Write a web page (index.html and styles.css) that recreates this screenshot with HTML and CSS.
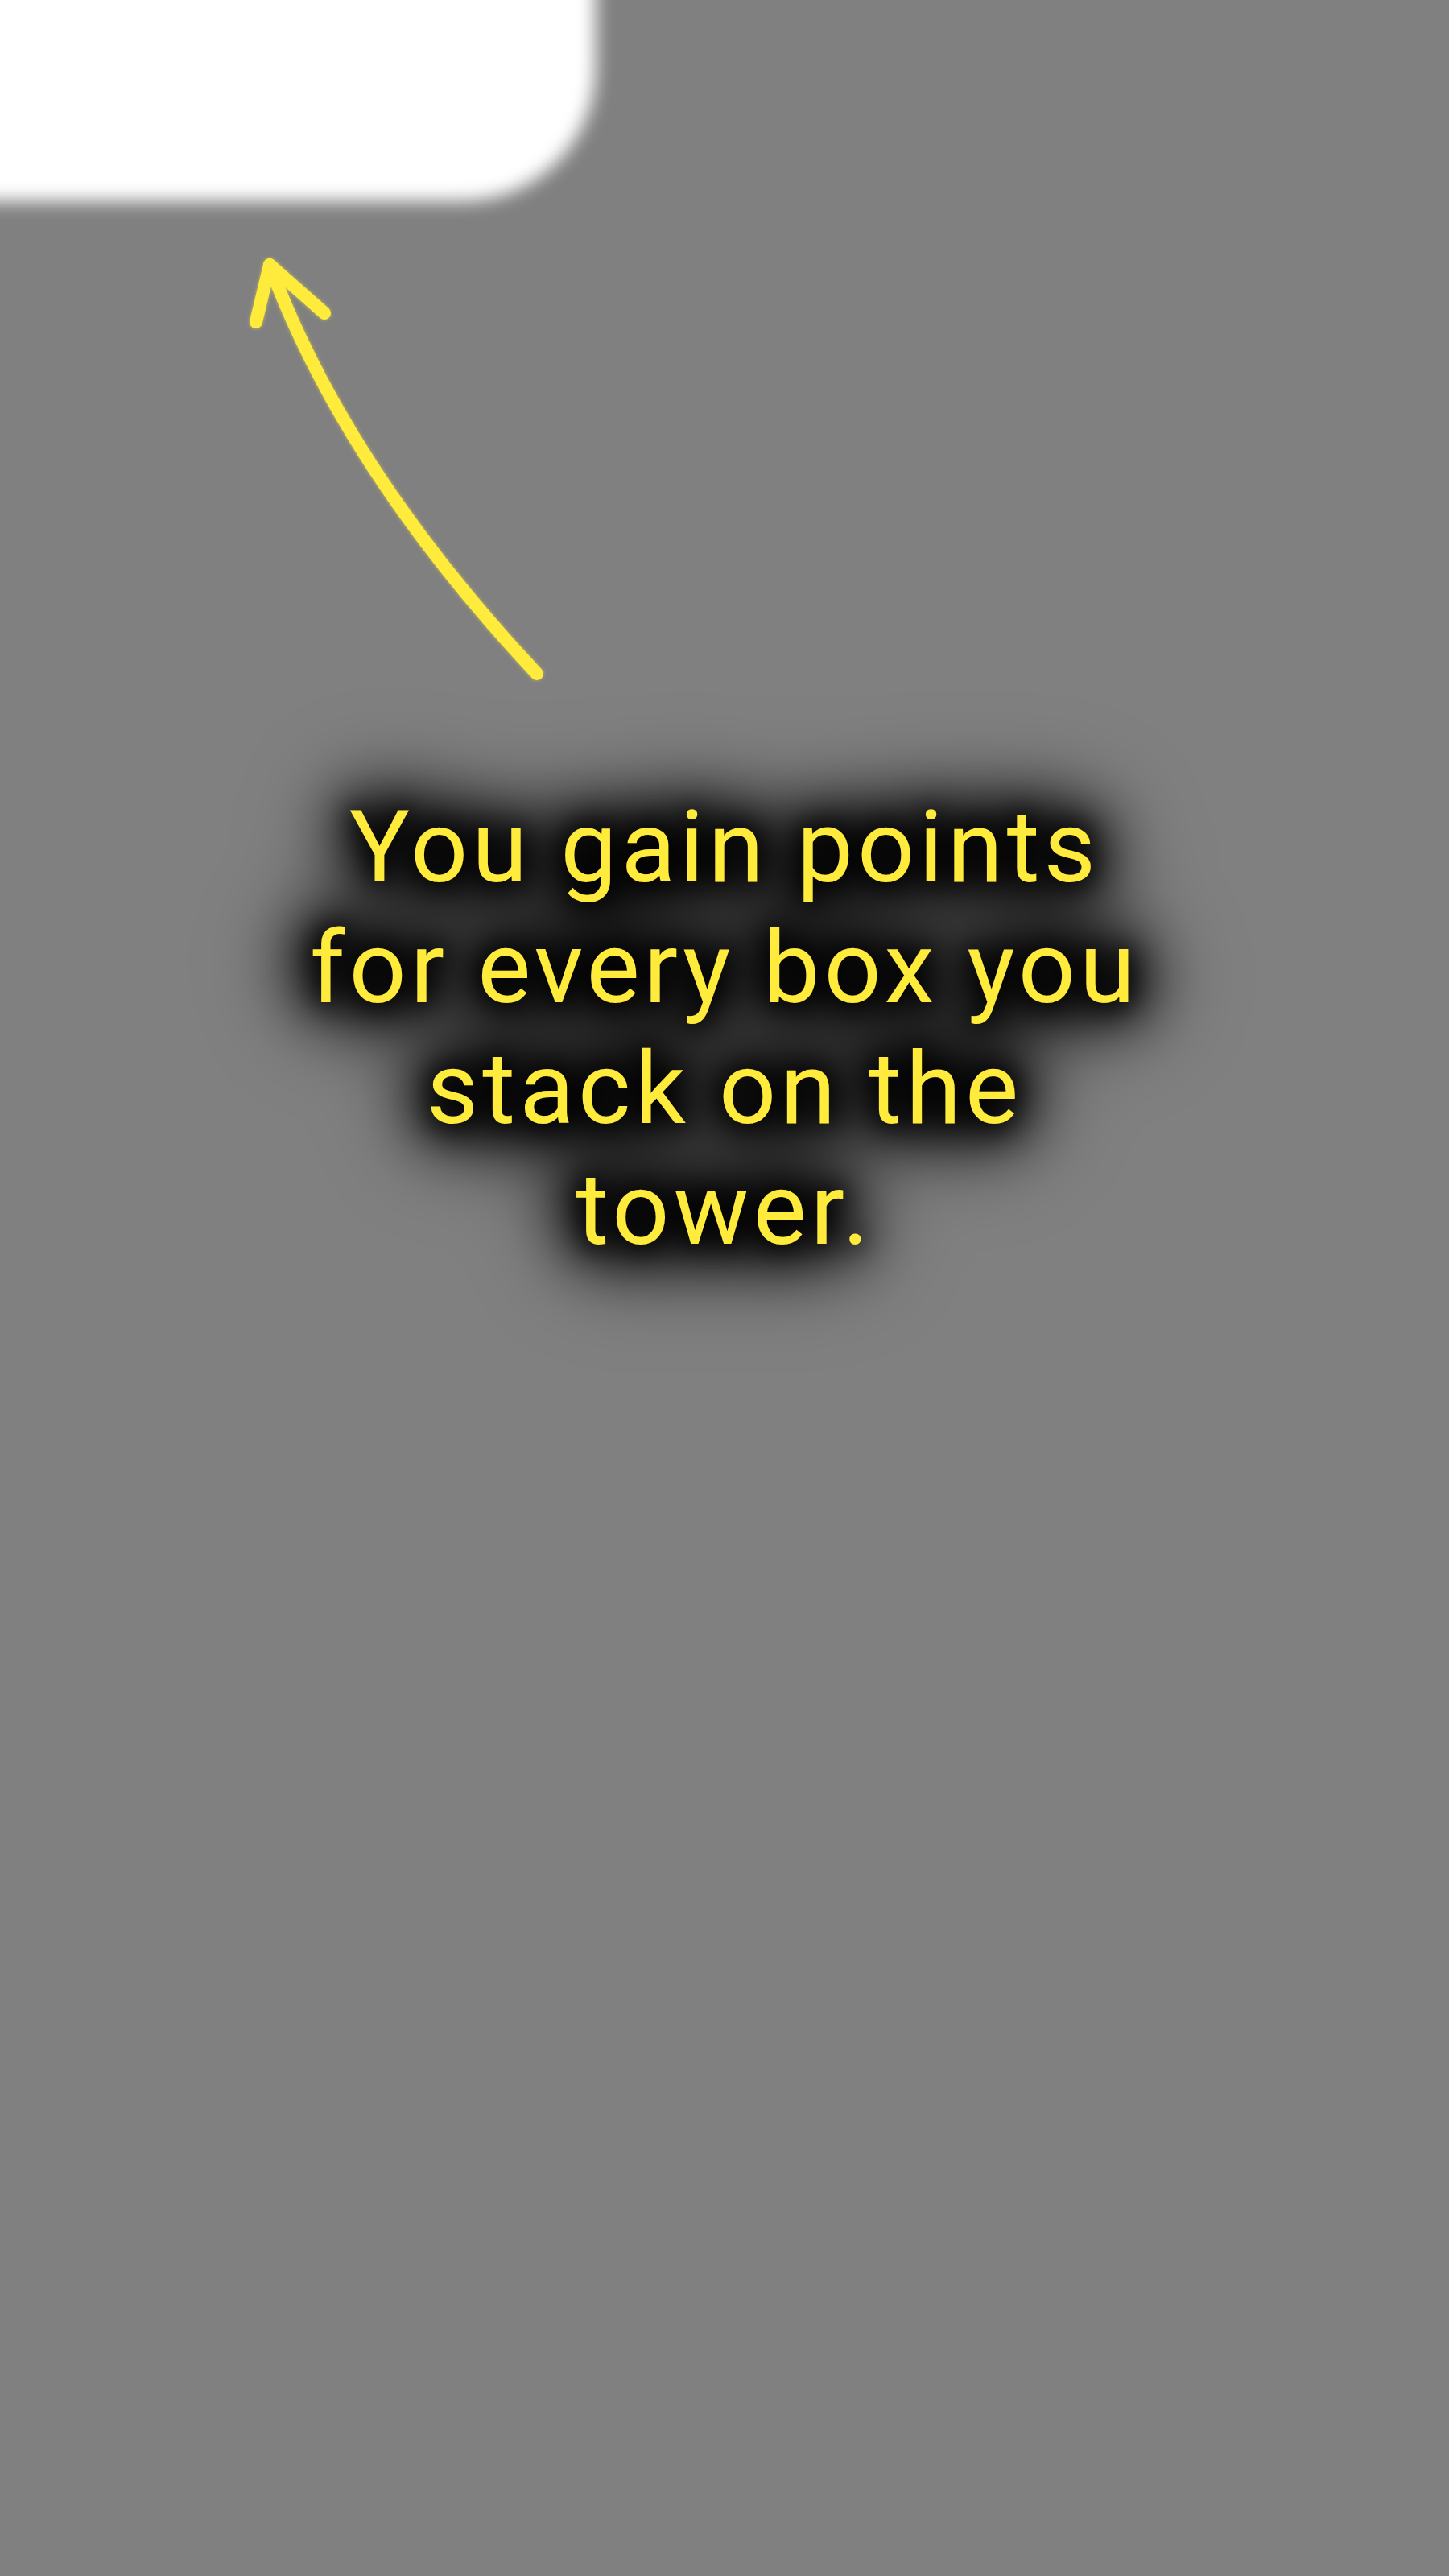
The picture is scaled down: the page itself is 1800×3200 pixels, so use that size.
FILE: index.html
```html
<!DOCTYPE html>
<html lang="en">
<head>
<meta charset="utf-8">
<title>Tutorial</title>
<link rel="stylesheet" href="styles.css">
</head>
<body>
<div class="overlay">
  <div class="spotlight"></div>
  <svg class="arrow" width="1800" height="1000" viewBox="0 0 1800 1000" aria-hidden="true">
    <path d="M667 837 Q 429 583 335 329" fill="none" stroke="#ffeb3b" stroke-width="16" stroke-linecap="round"/>
    <path d="M318 400 L335 329 L403 389" fill="none" stroke="#ffeb3b" stroke-width="16" stroke-linecap="round" stroke-linejoin="round"/>
  </svg>
  <p class="hint">You gain points for every box you stack on the tower.</p>
</div>
</body>
</html>
```
FILE: styles.css
```css
html, body {
  margin: 0;
  padding: 0;
  background: #808080;
}
.overlay {
  position: relative;
  width: 1800px;
  height: 3200px;
  display: flex;
  flex-direction: column;
  align-items: center;
  padding-top: 978px;
  box-sizing: border-box;
  overflow: hidden;
}
.spotlight {
  position: absolute;
  left: -40px;
  top: -40px;
  width: 780px;
  height: 290px;
  background: #ffffff;
  border-bottom-right-radius: 165px;
  filter: blur(11px);
}
.arrow {
  position: absolute;
  left: 0;
  top: 0;
  filter: drop-shadow(0 0 2px rgba(255, 235, 59, 0.6));
}
.hint {
  margin: 0;
  width: 1080px;
  text-align: center;
  font-family: Roboto, "Noto Sans", sans-serif;
  font-size: 125px;
  line-height: 150px;
  letter-spacing: 5px;
  color: #ffeb3b;
  filter: drop-shadow(0 0 14px #000) drop-shadow(0 0 22px #000) drop-shadow(0 0 34px #000) drop-shadow(0 0 48px #000);
}
```
